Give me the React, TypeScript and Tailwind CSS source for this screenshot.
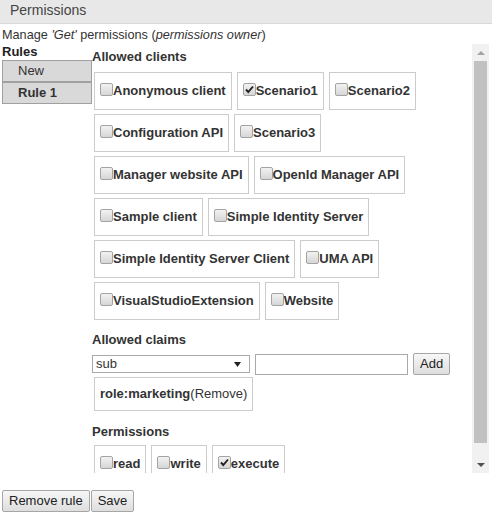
import React from "react"

const clients = [
  { name: "Anonymous client" },
  { name: "Scenario1", checked: true },
  { name: "Scenario2" },
  { name: "Configuration API" },
  { name: "Scenario3" },
  { name: "Manager website API" },
  { name: "OpenId Manager API" },
  { name: "Sample client" },
  { name: "Simple Identity Server" },
  { name: "Simple Identity Server Client" },
  { name: "UMA API" },
  { name: "VisualStudioExtension" },
  { name: "Website" },
]

const permissions = [
  { name: "read" },
  { name: "write" },
  { name: "execute", checked: true },
]

function Check({ checked }: { checked?: boolean }) {
  return (
    <span className="flex h-[13px] w-[13px] shrink-0 items-center justify-center rounded-[2px] border border-[#a3a3a3] bg-gradient-to-b from-[#f2f2f2] to-[#d6d6d6]">
      {checked && (
        <svg width="11" height="11" viewBox="0 0 11 11">
          <path d="M2 5.5 L4.3 8 L9 2.5" fill="none" stroke="#222" strokeWidth="1.9" />
        </svg>
      )}
    </span>
  )
}

function OptionBox({ name, checked }: { name: string; checked?: boolean }) {
  return (
    <div className="flex h-[38px] items-start whitespace-nowrap border border-[#cccccc] px-[5px] pt-[10px] font-bold leading-[16px]">
      <Check checked={checked} />
      <span>{name}</span>
    </div>
  )
}

function GrayButton({ children }: { children: React.ReactNode }) {
  return (
    <button className="h-[22px] rounded-[2px] border border-[#a6a6a6] bg-gradient-to-b from-[#f7f7f7] to-[#dedede] px-[6px] text-[13px] leading-[18px] text-[#222]">
      {children}
    </button>
  )
}

// drawn scrollbar, the page renders with hidden native scrollbars
function ScrollBar() {
  return (
    <div className="flex w-[17px] shrink-0 flex-col bg-[#f1f1f1]">
      <div className="flex h-[17px] items-center justify-center">
        <svg width="8" height="4" viewBox="0 0 8 4">
          <polygon points="0,4 8,4 4,0" fill="#a3a3a3" />
        </svg>
      </div>
      <div className="flex-1 px-[2px]">
        <div className="h-[382px] bg-[#c1c1c1]" />
      </div>
      <div className="flex h-[17px] items-center justify-center">
        <svg width="8" height="4" viewBox="0 0 8 4">
          <polygon points="0,0 8,0 4,4" fill="#505050" />
        </svg>
      </div>
    </div>
  )
}

export default function App() {
  return (
    <div className="h-[515px] w-[492px] overflow-hidden bg-white font-['Liberation_Sans',Arial,sans-serif] text-[13px] text-[#333]">
      <div className="h-[24px] border-b border-[#d8d8d8] bg-[#e8e8e8] pl-[10px] text-[14px] leading-[21px] text-[#444]">
        Permissions
      </div>
      <div className="h-[20px] pl-[2px] pt-[1px] text-[12.7px] leading-[20px]">
        Manage <i>'Get'</i> permissions (<i>permissions owner</i>)
      </div>

      <div className="flex h-[429px]">
        <div className="w-[92px] shrink-0">
          <div className="h-[16px] pl-[2px] font-bold leading-[16px] text-[#222]">Rules</div>
          <div className="ml-[2px] w-[90px]">
            <div className="h-[22px] border border-[#a0a0a0] bg-[#d9d9d9] pl-[15px] leading-[20px]">New</div>
            <div className="h-[22px] border border-[#a0a0a0] bg-[#d9d9d9] pl-[15px] font-bold leading-[20px]">Rule 1</div>
          </div>
        </div>

        <div className="mr-[3px] flex flex-1">
          <div className="min-w-0 flex-1 overflow-hidden">
            <div className="pt-[5px] font-bold leading-[16px]">Allowed clients</div>
            <div className="ml-[2px] mt-[7px] flex flex-wrap gap-x-[5px] gap-y-[4px]">
              {clients.map((c) => (
                <OptionBox key={c.name} name={c.name} checked={c.checked} />
              ))}
            </div>

            <div className="mt-[12px] font-bold leading-[16px]">Allowed claims</div>
            <div className="mt-[5px] flex items-center gap-[5px]">
              <div className="flex h-[18px] w-[158px] items-center justify-between border border-[#a9a9a9] pl-[3px] pr-[8px] leading-[16px]">
                <span>sub</span>
                <svg width="7" height="5" viewBox="0 0 7 5">
                  <polygon points="0,0 7,0 3.5,5" fill="#222" />
                </svg>
              </div>
              <input className="h-[21px] w-[153px] border border-[#a9a9a9] outline-none" />
              <GrayButton>Add</GrayButton>
            </div>
            <div className="ml-[2px] mt-[2px] w-fit border border-[#cccccc] px-[5px] py-[8px] leading-[16px]">
              <b>role:marketing</b>(Remove)
            </div>

            <div className="mt-[13px] font-bold leading-[16px]">Permissions</div>
            <div className="ml-[2px] mt-[5px] flex flex-wrap gap-x-[5px] gap-y-[4px]">
              {permissions.map((p) => (
                <OptionBox key={p.name} name={p.name} checked={p.checked} />
              ))}
            </div>
          </div>
          <ScrollBar />
        </div>
      </div>

      <div className="ml-[2px] mt-[17px] flex gap-[1px]">
        <GrayButton>Remove rule</GrayButton>
        <GrayButton>Save</GrayButton>
      </div>
    </div>
  )
}
